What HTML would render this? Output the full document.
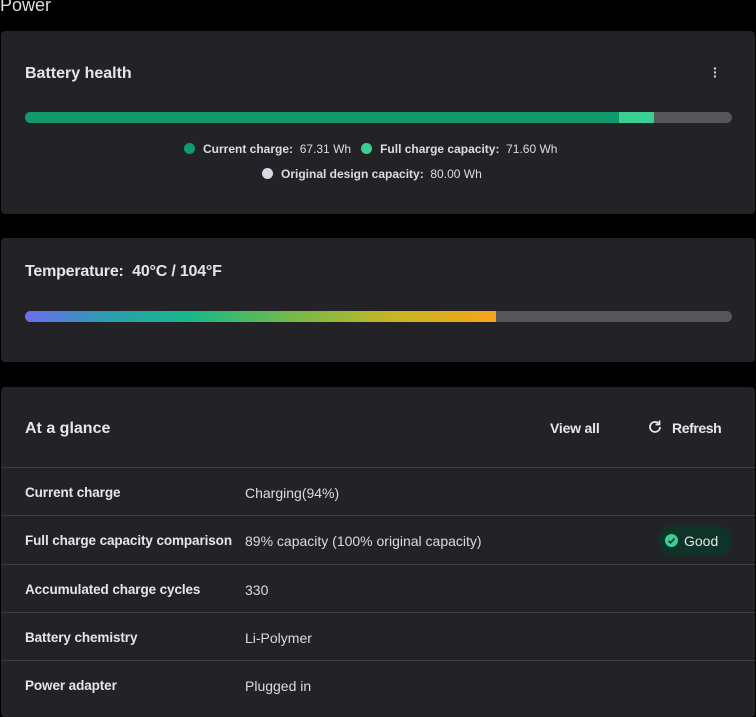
<!DOCTYPE html>
<html><head><style>
body{margin:0;background:#000;width:756px;height:699px;overflow:hidden;font-family:"Liberation Sans",sans-serif;color:#e8e8ea;position:relative}
.t{position:absolute;left:0;top:-5px;font-size:18px;color:#ddd}
.card{position:absolute;left:1px;width:754px;background:#232327;border-radius:4px}
.h{position:absolute;left:24px;font-size:16px;font-weight:bold;color:#e6e6e8}
.bar{position:absolute;left:24px;width:707px;height:11px;border-radius:6px;background:#55555b;overflow:hidden}
.lg{position:absolute;font-size:12px;color:#ddd;white-space:nowrap}
.lg b{font-weight:bold}
.dot{display:inline-block;width:11px;height:11px;border-radius:50%;vertical-align:-1px;margin-right:8px}
.row{position:absolute;left:0;width:754px;height:48px;border-top:1px solid #3e3e44;font-size:14px}
.row .k{position:absolute;left:24px;top:17px;font-weight:bold;color:#e6e6e8;font-size:13.5px;letter-spacing:-0.1px}
.row .v{position:absolute;left:244px;top:17px;color:#dcdcde}
</style></head><body>
<div class="t">Power</div>
<div class="card" style="top:31px;height:183px">
 <div class="h" style="top:34px">Battery health</div>
 <div style="position:absolute;left:712px;top:35px;color:#ddd;font-size:14px;font-weight:bold;line-height:4px">·<br>·<br>·</div>
 <div class="bar" style="top:81px"><div style="position:absolute;left:0;top:0;height:11px;width:594px;background:#119a6c"></div><div style="position:absolute;left:594px;top:0;height:11px;width:35px;background:#3ccf93"></div></div>
 <div class="lg" style="left:183px;top:111px"><span class="dot" style="background:#119a6c"></span><b>Current charge:</b>&nbsp; 67.31 Wh &nbsp;&nbsp;<span class="dot" style="background:#3ccf93"></span><b>Full charge capacity:</b>&nbsp; 71.60 Wh</div>
 <div class="lg" style="left:261px;top:136px"><span class="dot" style="background:#d4d9e4"></span><b>Original design capacity:</b>&nbsp; 80.00 Wh</div>
</div>
<div class="card" style="top:238px;height:124px">
 <div class="h" style="top:25px;letter-spacing:-0.2px">Temperature:&nbsp; 40°C / 104°F</div>
 <div class="bar" style="top:73px"><div style="position:absolute;left:0;top:0;height:11px;width:471px;background:linear-gradient(90deg,#6a6ef0,#2a9fae 18%,#17b88a 35%,#6cbb4c 55%,#c6b626 78%,#f7a418)"></div></div>
</div>
<div class="card" style="top:387px;height:330px">
 <div class="h" style="top:33px">At a glance</div>
 <div style="position:absolute;left:549px;top:33px;font-size:14px;font-weight:bold;letter-spacing:-0.2px">View all</div>
 <svg style="position:absolute;left:646px;top:32px" width="16" height="16" viewBox="0 0 16 16"><path d="M13 8a5 5 0 1 1-1.6-3.7" fill="none" stroke="#e6e6e8" stroke-width="1.8"/><path d="M12.5 1.5v4h-4" fill="none" stroke="#e6e6e8" stroke-width="1.8"/></svg>
 <div style="position:absolute;left:671px;top:33px;font-size:14px;font-weight:bold;letter-spacing:-0.4px">Refresh</div>
 <div class="row" style="top:80px"><span class="k">Current charge</span><span class="v">Charging(94%)</span></div>
 <div class="row" style="top:128px"><span class="k">Full charge capacity comparison</span><span class="v">89% capacity (100% original capacity)</span>
  <div style="position:absolute;left:657px;top:9px;width:74px;height:31px;border-radius:16px;background:#0e3328"><span style="position:absolute;left:7px;top:9px;width:13px;height:13px;border-radius:50%;background:#3ccf93"></span><svg style="position:absolute;left:7px;top:9px" width="13" height="13" viewBox="0 0 13 13"><path d="M3.5 6.8l2 2 4-4.3" fill="none" stroke="#0e3328" stroke-width="1.6"/></svg><span style="position:absolute;left:26px;top:8px;font-size:14px;color:#e6e6e8">Good</span></div></div>
 <div class="row" style="top:177px"><span class="k">Accumulated charge cycles</span><span class="v">330</span></div>
 <div class="row" style="top:225px"><span class="k">Battery chemistry</span><span class="v">Li-Polymer</span></div>
 <div class="row" style="top:273px"><span class="k">Power adapter</span><span class="v">Plugged in</span></div>
</div>
</body></html>
